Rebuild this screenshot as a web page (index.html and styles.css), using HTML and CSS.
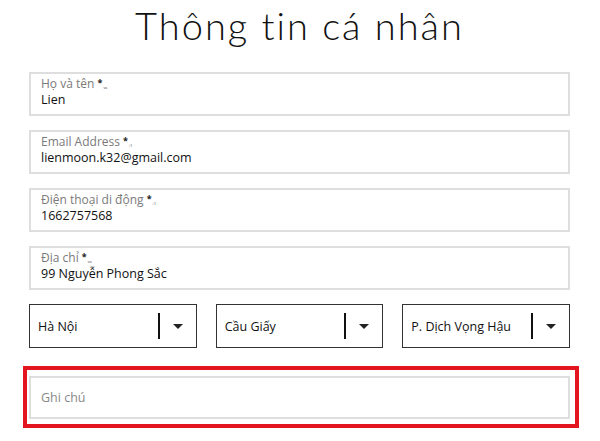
FILE: index.html
```html
<!DOCTYPE html>
<html lang="vi">
<head>
<meta charset="utf-8">
<title>Thông tin cá nhân</title>
<link rel="stylesheet" href="styles.css">
</head>
<body>
<div class="page">
  <h1 class="title">Thông tin cá nhân</h1>
  <div class="fields">
    <div class="field">
      <div class="label">Họ và tên <span class="req">*</span><span class="tiny">vs</span></div>
      <div class="value">Lien</div>
    </div>
    <div class="field">
      <div class="label">Email Address <span class="req">*</span><span class="tiny">:1</span></div>
      <div class="value">lienmoon.k32@gmail.com</div>
    </div>
    <div class="field">
      <div class="label">Điện thoại di động <span class="req">*</span><span class="tiny">:1</span></div>
      <div class="value">1662757568</div>
    </div>
    <div class="field">
      <div class="label">Địa chỉ <span class="req">*</span><span class="tiny">vs</span></div>
      <div class="value">99 Nguyễn Phong Sắc</div>
    </div>
    <div class="selects">
      <div class="select">
        <span class="sel-text">Hà Nội</span>
        <span class="divider"></span>
        <span class="arrow"></span>
      </div>
      <div class="select">
        <span class="sel-text">Cầu Giấy</span>
        <span class="divider"></span>
        <span class="arrow"></span>
      </div>
      <div class="select">
        <span class="sel-text">P. Dịch Vọng Hậu</span>
        <span class="divider"></span>
        <span class="arrow"></span>
      </div>
    </div>
    <div class="highlight">
      <div class="note">Ghi chú</div>
    </div>
  </div>
</div>
</body>
</html>
```
FILE: styles.css
```css
html, body {
  margin: 0;
  padding: 0;
  background: #ffffff;
}
body {
  font-family: "Open Sans", "Liberation Sans", sans-serif;
  color: #111;
}
.page {
  width: 541px;
  padding: 0 30px 0 29px;
}
.title {
  margin: 0;
  padding-top: 2px;
  height: 70px;
  text-align: center;
  font-family: "Lato", "Open Sans", sans-serif;
  font-weight: 300;
  font-size: 38px;
  line-height: 46px;
  color: #111;
  letter-spacing: 2px;
}
.fields {
  display: flex;
  flex-direction: column;
  gap: 14px;
}
.field {
  box-sizing: border-box;
  height: 44px;
  border: 2px solid #dedede;
  padding: 1.5px 10px 0 10px;
}
.label {
  display: flex;
  align-items: flex-start;
  height: 15px;
  font-size: 12px;
  line-height: 15px;
  color: #7a7a7a;
  white-space: pre;
}
.req {
  display: inline-block;
  height: 8px;
  line-height: 8px;
  margin-top: 3px;
  color: #222;
  font-size: 9px;
  font-weight: 700;
}
.tiny {
  display: inline-block;
  margin: 10px 0 0 1px;
  font-size: 4px;
  line-height: 4px;
  height: 4px;
  color: #333;
}
.value {
  margin-top: 1.5px;
  font-size: 12.5px;
  line-height: 16px;
  color: #111;
}
.selects {
  display: flex;
  gap: 19px;
}
.select {
  box-sizing: border-box;
  flex: 1;
  height: 44px;
  border: 1px solid #333;
  display: flex;
  align-items: center;
  padding: 0 0 0 8px;
}
.sel-text {
  flex: 1;
  font-size: 12.5px;
  color: #111;
}
.divider {
  width: 2px;
  height: 26px;
  background: #111;
}
.arrow {
  width: 0;
  height: 0;
  margin: 0 13px 0 13px;
  border-left: 5px solid transparent;
  border-right: 5px solid transparent;
  border-top: 5px solid #222;
}
.highlight {
  margin: 4px -9px 0 -6px;
  border: 4px solid #e3151f;
  padding: 6px 5px 5px 2px;
}
.note {
  box-sizing: border-box;
  height: 43px;
  border: 2px solid #dedede;
  padding: 0 10px;
  display: flex;
  align-items: center;
  font-size: 12.5px;
  color: #888;
}
```
